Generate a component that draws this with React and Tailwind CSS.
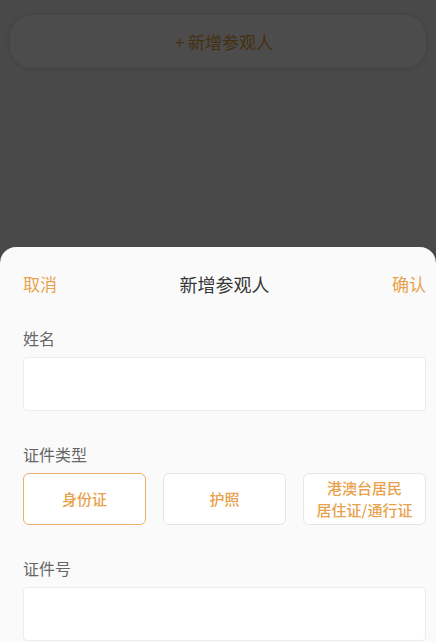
import { useState } from 'react'

const FONT = { fontFamily: '"Noto Sans CJK SC", "Noto Sans", sans-serif' }

const ID_TYPES = [
  { key: 'id', label: ['身份证'] },
  { key: 'passport', label: ['护照'] },
  { key: 'hmt', label: ['港澳台居民', '居住证/通行证'] },
]

function Field({ label, children }) {
  return (
    <div className="flex flex-col">
      <div className="text-[16px] leading-[24px] text-[#666666]">{label}</div>
      <div className="mt-[7px]">{children}</div>
    </div>
  )
}

export default function App() {
  const [idType, setIdType] = useState('id')

  return (
    <div className="relative h-[642px] w-full overflow-hidden bg-[#f5f5f5]" style={FONT}>
      {/* page underneath */}
      <div className="px-[10px] pt-[15px]">
        <button
          type="button"
          className="flex h-[53px] w-full items-center justify-center rounded-[22px] bg-white pl-[12px] text-[17px] text-[#e6a23c] shadow-[0_0_6px_rgba(0,0,0,0.15)]"
        >
          + 新增参观人
        </button>
      </div>

      {/* mask */}
      <div className="absolute inset-0 bg-black/70" />

      {/* bottom sheet */}
      <div className="absolute inset-x-0 bottom-0 top-[247px] rounded-t-[16px] bg-[#fafafa] px-[23px]">
        <div className="flex h-[74px] items-center justify-between">
          <button type="button" className="text-[17px] text-[#e8a24c]">取消</button>
          <div className="text-[18px] text-[#363636]">新增参观人</div>
          <button type="button" className="-mr-[13px] text-[17px] text-[#e8a24c]">确认</button>
        </div>

        <div className="mr-[-13px] flex flex-col gap-[31px] pt-[5px]">
          <Field label="姓名">
            <input className="block h-[54px] w-full rounded-[4px] border border-[#ececec] bg-white px-3 outline-none" />
          </Field>

          <Field label="证件类型">
            <div className="grid grid-cols-3 gap-[17px]">
              {ID_TYPES.map(t => (
                <button
                  key={t.key}
                  type="button"
                  onClick={() => setIdType(t.key)}
                  className={`flex h-[52px] flex-col items-center justify-center rounded-[6px] border bg-white text-[15px] font-medium leading-[22px] text-[#e8a24c] ${
                    idType === t.key ? 'border-[#e8b06a]' : 'border-[#e6e6e6]'
                  }`}
                >
                  {t.label.map(l => <span key={l}>{l}</span>)}
                </button>
              ))}
            </div>
          </Field>

          <Field label="证件号">
            <input className="block h-[54px] w-full rounded-[4px] border border-[#ececec] bg-white px-3 outline-none" />
          </Field>
        </div>
      </div>
    </div>
  )
}
